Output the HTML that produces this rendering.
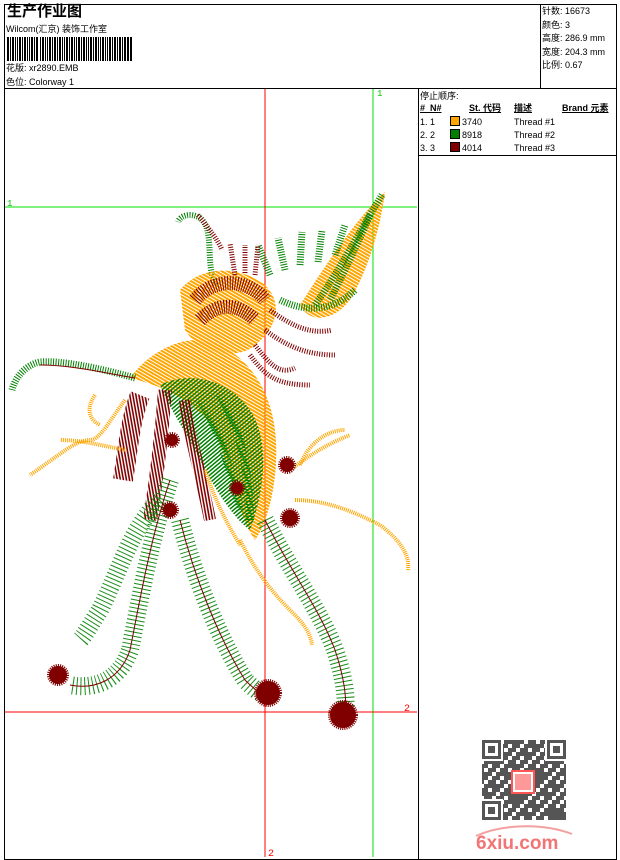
<!DOCTYPE html>
<html><head><meta charset="utf-8"><style>
body{margin:0;width:620px;height:860px;background:#fff;overflow:hidden;font-family:"Liberation Sans","Noto Sans CJK SC",sans-serif;}
.t{position:absolute;font-size:10px;color:#000;white-space:nowrap;line-height:12px}
</style></head><body>
<svg width="620" height="860" style="position:absolute;left:0;top:0" xmlns="http://www.w3.org/2000/svg">
<defs>
<pattern id="po" width="3" height="3" patternUnits="userSpaceOnUse" patternTransform="rotate(30)"><rect width="3" height="2" fill="#FFA500"/></pattern>
<pattern id="pg" width="3" height="3" patternUnits="userSpaceOnUse" patternTransform="rotate(-40)"><rect width="3" height="1.5" fill="#008000"/></pattern>
<pattern id="pr" width="3" height="3" patternUnits="userSpaceOnUse" patternTransform="rotate(80)"><rect width="3" height="1.6" fill="#800000"/></pattern>
<pattern id="qr" width="12" height="12" patternUnits="userSpaceOnUse"><rect width="4" height="4" fill="#555"/><rect x="8" y="0" width="4" height="8" fill="#555"/><rect x="4" y="4" width="4" height="4" fill="#555"/><rect x="0" y="8" width="8" height="4" fill="#555"/></pattern>
<pattern id="qr2" width="20" height="20" patternUnits="userSpaceOnUse"><rect x="12" y="0" width="4" height="12" fill="#555"/><rect x="0" y="12" width="12" height="4" fill="#555"/><rect x="16" y="16" width="4" height="4" fill="#555"/></pattern>
</defs>
<rect x="4.5" y="4.5" width="612" height="855" fill="none" stroke="#000"/>
<line x1="4" y1="88.5" x2="617" y2="88.5" stroke="#000"/>
<line x1="540.5" y1="4" x2="540.5" y2="88" stroke="#000"/>
<line x1="418.5" y1="88" x2="418.5" y2="860" stroke="#000"/>
<line x1="418" y1="155.5" x2="617" y2="155.5" stroke="#000"/>
<g fill="#000">
<rect x="7" y="37" width="2" height="24"/><rect x="10" y="37" width="1" height="24"/><rect x="12" y="37" width="2" height="24"/><rect x="15" y="37" width="1" height="24"/><rect x="17" y="37" width="1" height="24"/><rect x="19" y="37" width="2" height="24"/><rect x="22" y="37" width="1" height="24"/><rect x="24" y="37" width="2" height="24"/><rect x="27" y="37" width="1" height="24"/><rect x="29" y="37" width="1" height="24"/><rect x="31" y="37" width="2" height="24"/><rect x="34" y="37" width="1" height="24"/><rect x="36" y="37" width="2" height="24"/><rect x="40" y="37" width="1" height="24"/><rect x="42" y="37" width="2" height="24"/><rect x="45" y="37" width="1" height="24"/><rect x="47" y="37" width="1" height="24"/><rect x="49" y="37" width="2" height="24"/><rect x="52" y="37" width="1" height="24"/><rect x="54" y="37" width="2" height="24"/><rect x="57" y="37" width="1" height="24"/><rect x="59" y="37" width="2" height="24"/><rect x="62" y="37" width="1" height="24"/><rect x="64" y="37" width="1" height="24"/><rect x="66" y="37" width="2" height="24"/><rect x="69" y="37" width="1" height="24"/><rect x="71" y="37" width="2" height="24"/><rect x="74" y="37" width="1" height="24"/><rect x="76" y="37" width="1" height="24"/><rect x="78" y="37" width="2" height="24"/><rect x="81" y="37" width="1" height="24"/><rect x="83" y="37" width="2" height="24"/><rect x="86" y="37" width="1" height="24"/><rect x="88" y="37" width="1" height="24"/><rect x="90" y="37" width="2" height="24"/><rect x="93" y="37" width="1" height="24"/><rect x="95" y="37" width="2" height="24"/><rect x="98" y="37" width="1" height="24"/><rect x="100" y="37" width="1" height="24"/><rect x="102" y="37" width="2" height="24"/><rect x="105" y="37" width="1" height="24"/><rect x="107" y="37" width="1" height="24"/><rect x="109" y="37" width="2" height="24"/><rect x="112" y="37" width="1" height="24"/><rect x="114" y="37" width="2" height="24"/><rect x="117" y="37" width="1" height="24"/><rect x="119" y="37" width="2" height="24"/><rect x="122" y="37" width="1" height="24"/><rect x="124" y="37" width="2" height="24"/><rect x="127" y="37" width="2" height="24"/><rect x="130" y="37" width="2" height="24"/>
</g>
<line x1="5" y1="207" x2="417" y2="207" stroke="#00e000"/>
<line x1="373" y1="89" x2="373" y2="857" stroke="#00e000"/>
<line x1="265" y1="89" x2="265" y2="857" stroke="#f00"/>
<line x1="5" y1="712" x2="417" y2="712" stroke="#f00"/>
<text x="377" y="96" font-size="9" fill="#00c000" font-family="Liberation Mono">1</text>
<text x="7" y="206" font-size="9" fill="#00c000" font-family="Liberation Mono">1</text>
<text x="404" y="711" font-size="10" fill="#f00" font-family="Liberation Mono">2</text>
<text x="268" y="856" font-size="10" fill="#f00" font-family="Liberation Mono">2</text>
<g fill="none" stroke-linecap="butt">
<!-- wing -->
<path d="M385 192 C360 215 335 250 300 305 C310 325 335 320 350 300 C368 270 380 230 385 192Z" fill="url(#po)"/>
<g stroke="#008000" stroke-width="7" stroke-dasharray="1 1.5">
<path d="M382 195 C360 230 340 270 315 305"/><path d="M370 215 C355 250 340 280 330 300"/>
<path d="M270 275 L258 245"/><path d="M285 270 L278 238"/><path d="M300 265 L302 232"/><path d="M318 262 L322 230"/><path d="M335 255 L345 225"/>
<path d="M280 300 C300 310 330 315 355 290"/>
</g>
<path d="M215 285 C205 260 215 230 200 218 C190 212 180 216 178 222" stroke="#008000" stroke-width="6" stroke-dasharray="1 1.5"/>
<path d="M198 215 C210 230 218 240 222 250" stroke="#800000" stroke-width="5" stroke-dasharray="1 1.5"/>
<!-- head -->
<path d="M180 290 C200 265 240 265 265 285 C285 305 275 330 255 345 C240 360 200 355 185 330Z" fill="url(#po)"/>
<path d="M195 300 C215 275 250 280 265 300 M200 320 C220 300 240 305 255 320" stroke="#800000" stroke-width="14" stroke-dasharray="1 1.5"/>
<g stroke="#800000" stroke-width="5" stroke-dasharray="1 1.5">
<path d="M235 275 L230 243"/><path d="M245 273 L245 245"/><path d="M255 275 L258 245"/>
<path d="M270 310 C290 325 310 335 332 330"/><path d="M265 330 C285 345 305 355 335 355"/><path d="M255 345 C270 365 280 375 295 368"/><path d="M250 355 C265 375 275 385 310 385"/>
</g>
<!-- neck/body -->
<path d="M130 378 C150 350 190 330 220 345 C250 360 270 390 275 430 C280 470 270 520 255 540 C240 520 230 470 215 430 C195 400 160 385 130 378Z" fill="url(#po)"/>
<path d="M160 385 C190 370 230 380 250 410 C270 440 265 490 250 530 C235 520 215 490 200 460 C185 430 170 410 160 385Z" fill="url(#pg)"/>
<path d="M200 400 C220 430 230 470 240 510 M220 395 C240 430 250 470 250 520" stroke="#008000" stroke-width="8" stroke-dasharray="1 2"/>
<path d="M135 378 C100 368 60 360 40 362 C25 365 15 378 12 390" stroke="#008000" stroke-width="7" stroke-dasharray="1 1.5"/>
<path d="M135 378 C100 372 70 365 40 365" stroke="#800000" stroke-width="1"/>
<path d="M140 395 C130 420 128 450 123 480" stroke="url(#pr)" stroke-width="20"/>
<path d="M165 390 C162 430 158 470 150 520" stroke="url(#pr)" stroke-width="14"/>
<path d="M185 400 C190 440 200 470 210 520" stroke="url(#pr)" stroke-width="12"/>
<g stroke="#FFA500" stroke-width="4" stroke-dasharray="1 1">
<path d="M125 400 C110 420 100 440 90 440 C75 440 60 455 30 475"/>
<path d="M125 450 C100 445 80 440 60 440"/>
<path d="M95 395 C85 410 90 420 100 425"/>
<path d="M290 470 C310 455 325 445 350 435"/><path d="M300 465 C310 440 330 430 345 430"/>
<path d="M295 500 C330 500 360 515 380 525 C400 540 410 555 408 570"/>
<path d="M240 540 C255 570 270 590 290 610 C300 620 310 630 312 645"/>
<path d="M205 470 C215 500 225 520 240 545"/>
</g>
<g stroke="#008000" stroke-width="18" stroke-dasharray="1 3" opacity="0.9">
<path d="M170 480 C150 540 140 600 130 650 C120 680 95 690 70 685"/>
<path d="M180 520 C195 580 220 640 245 680 C255 690 262 695 268 695"/>
<path d="M265 520 C290 570 320 610 335 650 C345 680 347 700 345 715"/>
<path d="M160 500 C130 530 120 570 100 610 C90 625 85 635 80 640"/>
</g>
<g stroke="#800000" stroke-width="1">
<path d="M170 480 C150 540 140 600 130 650 C120 680 95 690 70 685"/>
<path d="M180 520 C195 580 220 640 245 680 C255 690 262 695 268 695"/>
<path d="M265 520 C290 570 320 610 335 650 C345 680 347 700 345 715"/>
</g>
<g fill="#800000" stroke="#800000" stroke-width="4" stroke-dasharray="1 1">
<circle cx="58" cy="675" r="9"/><circle cx="268" cy="693" r="12"/><circle cx="343" cy="715" r="13"/>
<circle cx="170" cy="510" r="7"/><circle cx="237" cy="488" r="6"/><circle cx="290" cy="518" r="8"/><circle cx="287" cy="465" r="7"/><circle cx="172" cy="440" r="6"/>
</g>
</g>
<!-- QR -->
<rect x="482" y="740" width="84" height="80" fill="url(#qr)"/>
<rect x="482" y="740" width="84" height="80" fill="url(#qr2)"/>
<g fill="#555">
<rect x="480" y="738" width="23" height="23" fill="#fff"/><rect x="545" y="738" width="23" height="23" fill="#fff"/><rect x="480" y="799" width="23" height="23" fill="#fff"/>
<rect x="482" y="740" width="19" height="19"/><rect x="485" y="743" width="13" height="13" fill="#fff"/><rect x="488" y="746" width="7" height="7"/>
<rect x="547" y="740" width="19" height="19"/><rect x="550" y="743" width="13" height="13" fill="#fff"/><rect x="553" y="746" width="7" height="7"/>
<rect x="482" y="801" width="19" height="19"/><rect x="485" y="804" width="13" height="13" fill="#fff"/><rect x="488" y="807" width="7" height="7"/>
</g>
<rect x="512" y="771" width="22" height="22" fill="#fff" stroke="#f55" stroke-width="2"/>
<rect x="515" y="774" width="16" height="16" fill="#f99"/>
<path d="M476 836 C500 825 540 822 572 834" stroke="#f2a0a0" stroke-width="2" fill="none"/>
<text x="476" y="849" font-size="19" font-weight="bold" fill="#f27575" font-family="Liberation Sans">6xiu.com</text>
</svg>
<div class="t" style="left:7px;top:3px;font-size:15px;line-height:18px;font-weight:bold">生产作业图</div>
<div class="t" style="left:6px;top:23px;font-size:9px">Wilcom(汇京) 装饰工作室</div>
<div class="t" style="left:6px;top:62px;font-size:9px">花版: xr2890.EMB</div>
<div class="t" style="left:6px;top:76px;font-size:9px">色位: Colorway 1</div>
<div class="t" style="left:542px;top:5px;font-size:9px;line-height:13.5px">针数: 16673<br>颜色: 3<br>高度: 286.9 mm<br>宽度: 204.3 mm<br>比例: 0.67</div>
<div class="t" style="left:420px;top:90px;font-size:9px">停止顺序:</div>
<div class="t" style="left:420px;top:102px;font-size:9px;font-weight:bold;text-decoration:underline">#&nbsp;&nbsp;N#</div>
<div class="t" style="left:469px;top:102px;font-size:9px;font-weight:bold;text-decoration:underline">St. 代码</div>
<div class="t" style="left:514px;top:102px;font-size:9px;font-weight:bold;text-decoration:underline">描述</div>
<div class="t" style="left:562px;top:102px;font-size:9px;font-weight:bold;text-decoration:underline">Brand 元素</div>
<div class="t" style="left:420px;top:116px;font-size:9px;line-height:13px">1. 1<br>2. 2<br>3. 3</div>
<div style="position:absolute;left:450px;top:116px;width:8px;height:8px;background:#FFA500;border:1px solid #000"></div>
<div style="position:absolute;left:450px;top:129px;width:8px;height:8px;background:#008000;border:1px solid #000"></div>
<div style="position:absolute;left:450px;top:142px;width:8px;height:8px;background:#800000;border:1px solid #000"></div>
<div class="t" style="left:462px;top:116px;font-size:9px;line-height:13px">3740<br>8918<br>4014</div>
<div class="t" style="left:514px;top:116px;font-size:9px;line-height:13px">Thread #1<br>Thread #2<br>Thread #3</div>
</body></html>
